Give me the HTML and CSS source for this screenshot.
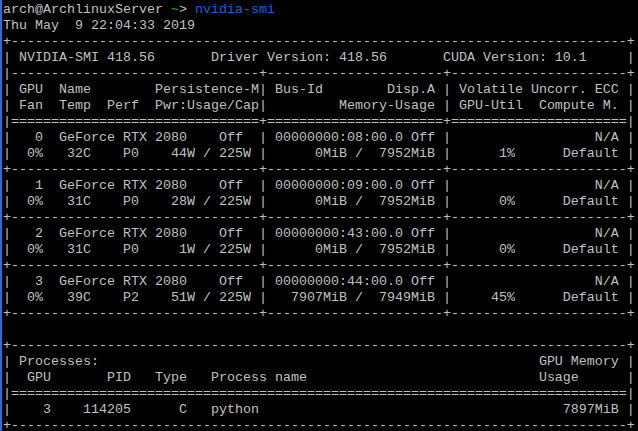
FILE: index.html
```html
<!DOCTYPE html>
<html lang="en">
<head>
  <meta charset="UTF-8" />
  <meta name="viewport" content="width=device-width, initial-scale=1.0"/>
  <title>nvidia-smi</title>
  <link rel="stylesheet" href="styles.css">
</head>
<body>
  <div class="terminal">
<pre class="screen"><span class="user">arch@ArchlinuxServer</span> <span class="cwd">~</span>&gt; <span class="cmd">nvidia-smi</span>
Thu May  9 22:04:33 2019
+-----------------------------------------------------------------------------+
| NVIDIA-SMI 418.56       Driver Version: 418.56       CUDA Version: 10.1     |
|-------------------------------+----------------------+----------------------+
| GPU  Name        Persistence-M| Bus-Id        Disp.A | Volatile Uncorr. ECC |
| Fan  Temp  Perf  Pwr:Usage/Cap|         Memory-Usage | GPU-Util  Compute M. |
|===============================+======================+======================|
|   0  GeForce RTX 2080    Off  | 00000000:08:00.0 Off |                  N/A |
|  0%   32C    P0    44W / 225W |      0MiB /  7952MiB |      1%      Default |
+-------------------------------+----------------------+----------------------+
|   1  GeForce RTX 2080    Off  | 00000000:09:00.0 Off |                  N/A |
|  0%   31C    P0    28W / 225W |      0MiB /  7952MiB |      0%      Default |
+-------------------------------+----------------------+----------------------+
|   2  GeForce RTX 2080    Off  | 00000000:43:00.0 Off |                  N/A |
|  0%   31C    P0     1W / 225W |      0MiB /  7952MiB |      0%      Default |
+-------------------------------+----------------------+----------------------+
|   3  GeForce RTX 2080    Off  | 00000000:44:00.0 Off |                  N/A |
|  0%   39C    P2    51W / 225W |   7907MiB /  7949MiB |     45%      Default |
+-------------------------------+----------------------+----------------------+

+-----------------------------------------------------------------------------+
| Processes:                                                       GPU Memory |
|  GPU       PID   Type   Process name                             Usage      |
|=============================================================================|
|    3    114205      C   python                                      7897MiB |
+-----------------------------------------------------------------------------+
</pre>
  </div>
</body>
</html>
```

FILE: styles.css
```css
html, body {
  margin: 0;
  padding: 0;
  background-color: #000;
  height: 100%;
  overflow: hidden;
}

.terminal {
  border-left: 2px solid #2b6fd6;
  padding: 2px 0 0 1px;
  height: 100%;
  box-sizing: border-box;
}

.screen {
  margin: 0;
  font-family: "Liberation Mono", "Courier New", monospace;
  font-size: 13.333px;
  line-height: 16px;
  color: #c0c0c0;
  white-space: pre;
}

.user {
  color: #c0c0c0;
}

.cwd {
  color: #1fb41f;
}

.cmd {
  color: #1e5fe0;
}
```
